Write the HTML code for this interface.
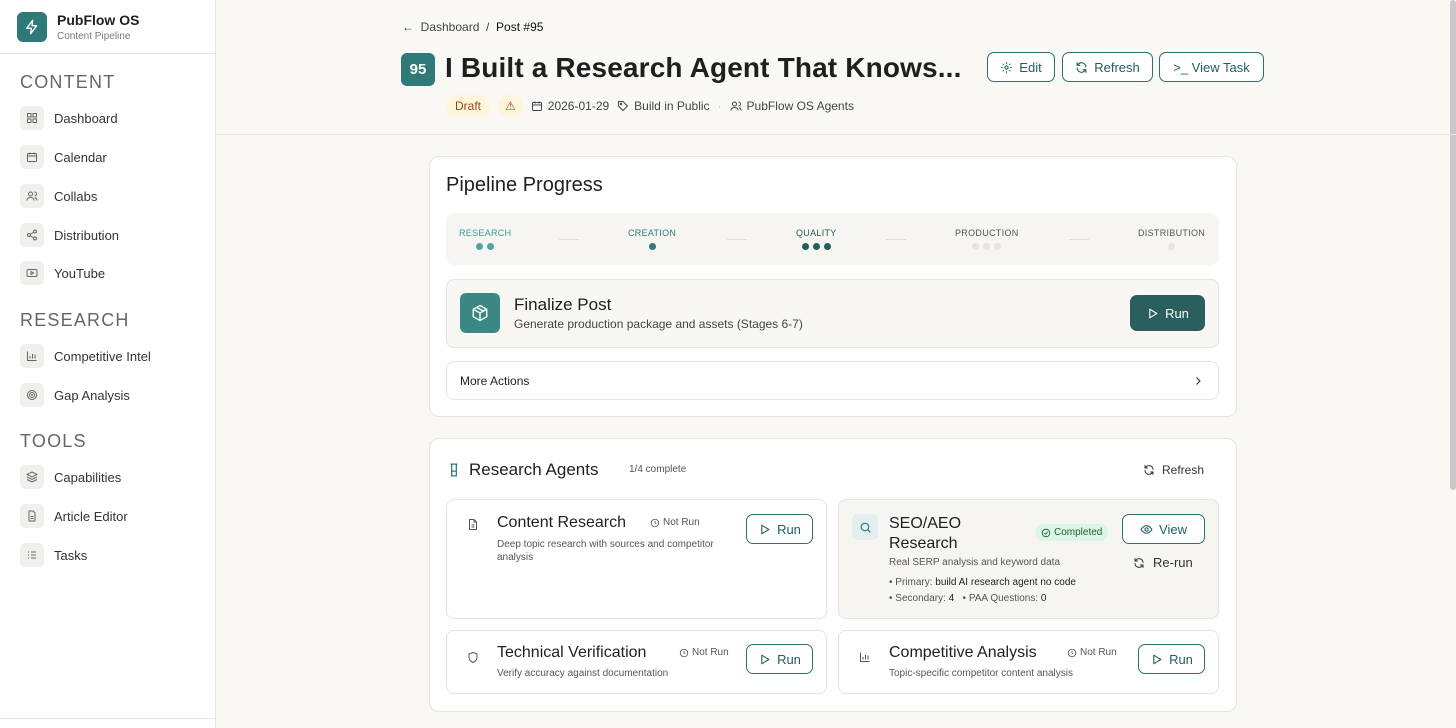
<!DOCTYPE html>
<html><head><meta charset="utf-8"><style>
*{box-sizing:border-box;margin:0;padding:0}
body{width:1456px;height:728px;overflow:hidden;background:#f9f8f5;font-family:"Liberation Sans",sans-serif;color:#1f1f1f;position:relative}
.sb{position:absolute;left:0;top:0;width:216px;height:728px;background:#fff;border-right:1px solid #e6e4df}
.logo{position:absolute;left:17px;top:12px;width:30px;height:30px;border-radius:6px;background:#2f7a78;display:flex;align-items:center;justify-content:center}
.brand{position:absolute;left:57px;top:12px;font-weight:bold;font-size:14px}
.brand small{display:block;font-weight:normal;font-size:10px;color:#777;margin-top:3px}
.sbline{position:absolute;left:0;top:53px;width:215px;border-top:1px solid #e6e4df}
.sec{position:absolute;left:20px;font-size:18px;color:#666;letter-spacing:1.2px}
.it{position:absolute;left:20px;display:flex;align-items:center;font-size:13px;color:#333}
.it i{width:24px;height:24px;border-radius:5px;background:#f0efec;margin-right:10px;display:flex;align-items:center;justify-content:center}
.hdrline{position:absolute;left:216px;right:0;top:134px;border-top:1px solid #e6e4df}
.crumb{position:absolute;left:402px;top:20px;font-size:12px;color:#444}
.num{position:absolute;left:401px;top:53px;width:34px;height:33px;border-radius:6px;background:#2f7a78;color:#fff;font-weight:bold;font-size:15px;display:flex;align-items:center;justify-content:center}
h1{position:absolute;left:445px;top:52px;font-size:28px;font-weight:bold;letter-spacing:0.15px}
.btn{position:absolute;height:30px;border:1.5px solid #2f6f6d;border-radius:7px;color:#235e5c;font-size:13px;display:flex;align-items:center;justify-content:center;gap:6px;background:#fff}
.meta{position:absolute;top:95px;left:446px;display:flex;align-items:center;font-size:12px;color:#444;gap:8px}
.meta span{display:flex;align-items:center;gap:5px}
.pill{background:#fdf6dc;color:#9a4a10;border-radius:10px;padding:4px 9px}
.card{position:absolute;left:429px;width:808px;background:#fff;border:1px solid #e6e4df;border-radius:10px}
.steps{position:absolute;left:446px;top:213px;width:773px;height:52px;background:#f6f5f2;border-radius:8px}
.st{position:absolute;top:15px;font-size:9px;letter-spacing:.3px;text-align:center}
.dots{margin-top:5px;display:flex;gap:4px;justify-content:center}
.dots b{width:7px;height:7px;border-radius:50%;display:block}
.dash{position:absolute;top:26px;width:20px;border-top:1px solid #ddd}
.sub{position:absolute;background:#fff;border:1px solid #e6e4df;border-radius:8px}
.agt{font-size:16px;color:#1f1f1f}
.nr{font-size:10px;color:#555;display:flex;align-items:center;gap:3px}
.d{font-size:10px;color:#555}
</style></head><body>
<svg width="0" height="0" style="position:absolute"><defs>
<symbol id="play" viewBox="0 0 24 24"><path d="M7 4l13 8-13 8z" fill="none" stroke="currentColor" stroke-width="2" stroke-linejoin="round"/></symbol>
<symbol id="clock" viewBox="0 0 24 24"><g fill="none" stroke="currentColor" stroke-width="2"><circle cx="12" cy="12" r="9"/><path d="M12 7v5l3 2"/></g></symbol>
<symbol id="ref" viewBox="0 0 24 24"><g fill="none" stroke="currentColor" stroke-width="2" stroke-linecap="round"><path d="M20 11a8 8 0 00-14-5L4 8M4 3v5h5M4 13a8 8 0 0014 5l2-2M20 21v-5h-5"/></g></symbol>
</defs></svg>
<div class="sb">
<div class="logo"><svg width="16" height="16" viewBox="0 0 24 24" fill="none" stroke="#fff" stroke-width="2" stroke-linejoin="round"><path d="M13 2L4 14h7l-1 8 9-12h-7z"/></svg></div>
<div class="brand">PubFlow OS<small>Content Pipeline</small></div>
<div class="sbline"></div>
<div class="sec" style="top:72px">CONTENT</div>
<div class="it" style="top:106px"><i><svg width="12" height="12" viewBox="0 0 24 24" fill="none" stroke="#666" stroke-width="2"><rect x="3" y="3" width="7" height="7"/><rect x="14" y="3" width="7" height="7"/><rect x="3" y="14" width="7" height="7"/><rect x="14" y="14" width="7" height="7"/></svg></i>Dashboard</div>
<div class="it" style="top:145px"><i><svg width="12" height="12" viewBox="0 0 24 24" fill="none" stroke="#666" stroke-width="2"><rect x="3" y="5" width="18" height="16" rx="2"/><path d="M3 10h18M8 3v4M16 3v4"/></svg></i>Calendar</div>
<div class="it" style="top:184px"><i><svg width="12" height="12" viewBox="0 0 24 24" fill="none" stroke="#666" stroke-width="2"><circle cx="9" cy="8" r="4"/><path d="M2 21c0-4 3-6 7-6s7 2 7 6M17 4a4 4 0 010 8M22 21c0-3-2-5-4-6"/></svg></i>Collabs</div>
<div class="it" style="top:223px"><i><svg width="12" height="12" viewBox="0 0 24 24" fill="none" stroke="#666" stroke-width="2"><circle cx="18" cy="5" r="3"/><circle cx="6" cy="12" r="3"/><circle cx="18" cy="19" r="3"/><path d="M8.6 13.5l6.8 4M15.4 6.5l-6.8 4"/></svg></i>Distribution</div>
<div class="it" style="top:261px"><i><svg width="12" height="12" viewBox="0 0 24 24" fill="none" stroke="#666" stroke-width="2"><rect x="2" y="5" width="20" height="14" rx="3"/><path d="M10 9l5 3-5 3z"/></svg></i>YouTube</div>
<div class="sec" style="top:310px">RESEARCH</div>
<div class="it" style="top:344px"><i><svg width="12" height="12" viewBox="0 0 24 24" fill="none" stroke="#666" stroke-width="2"><path d="M3 3v18h18M8 17v-5M13 17V8M18 17v-8"/></svg></i>Competitive Intel</div>
<div class="it" style="top:383px"><i><svg width="12" height="12" viewBox="0 0 24 24" fill="none" stroke="#666" stroke-width="2"><circle cx="12" cy="12" r="9"/><circle cx="12" cy="12" r="5"/><circle cx="12" cy="12" r="1"/></svg></i>Gap Analysis</div>
<div class="sec" style="top:431px">TOOLS</div>
<div class="it" style="top:465px"><i><svg width="12" height="12" viewBox="0 0 24 24" fill="none" stroke="#666" stroke-width="2"><path d="M12 2l10 5-10 5L2 7z M2 12l10 5 10-5M2 17l10 5 10-5"/></svg></i>Capabilities</div>
<div class="it" style="top:504px"><i><svg width="12" height="12" viewBox="0 0 24 24" fill="none" stroke="#666" stroke-width="2"><path d="M14 2H6v20h12V6zM9 13h6M9 17h6"/></svg></i>Article Editor</div>
<div class="it" style="top:543px"><i><svg width="12" height="12" viewBox="0 0 24 24" fill="none" stroke="#666" stroke-width="2"><path d="M4 6h2M10 6h10M4 12h2M10 12h10M4 18h2M10 18h10"/></svg></i>Tasks</div>
<div style="position:absolute;left:0;top:718px;width:215px;border-top:1px solid #e6e4df"></div>
</div>
<div style="position:absolute;right:0;top:0;width:6px;height:490px;background:#c9c9c9;border-radius:3px"></div>

<div class="crumb">← &nbsp;Dashboard &nbsp;/ &nbsp;<span style="color:#111">Post #95</span></div>
<div class="num">95</div>
<h1>I Built a Research Agent That Knows...</h1>
<div class="btn" style="left:987px;top:52px;width:68px"><svg width="13" height="13" viewBox="0 0 24 24" fill="none" stroke="currentColor" stroke-width="2"><circle cx="12" cy="12" r="3"/><path d="M12 2v3M12 19v3M2 12h3M19 12h3M5 5l2 2M17 17l2 2M5 19l2-2M17 7l2-2"/></svg>Edit</div>
<div class="btn" style="left:1062px;top:52px;width:91px"><svg width="13" height="13"><use href="#ref"/></svg>Refresh</div>
<div class="btn" style="left:1159px;top:52px;width:105px">&gt;_ View Task</div>
<div class="meta"><span class="pill">Draft</span><span class="pill" style="padding:4px 7px">⚠</span><span><svg width="12" height="12" viewBox="0 0 24 24" fill="none" stroke="#444" stroke-width="2"><rect x="3" y="5" width="18" height="16" rx="2"/><path d="M3 10h18M8 3v4M16 3v4"/></svg>2026-01-29</span><span><svg width="12" height="12" viewBox="0 0 24 24" fill="none" stroke="#444" stroke-width="2"><path d="M3 3h9l9 9-9 9-9-9z"/><circle cx="8" cy="8" r="1.5"/></svg>Build in Public</span><span style="color:#bbb">·</span><span><svg width="12" height="12" viewBox="0 0 24 24" fill="none" stroke="#444" stroke-width="2"><circle cx="9" cy="8" r="4"/><path d="M2 21c0-4 3-6 7-6s7 2 7 6M17 4a4 4 0 010 8M22 21c0-3-2-5-4-6"/></svg>PubFlow OS Agents</span></div>
<div class="hdrline"></div>

<div class="card" style="top:156px;height:261px"></div>
<div style="position:absolute;left:446px;top:174px;font-size:20px">Pipeline Progress</div>
<div class="steps">
<div class="st" style="left:13px;color:#3e9995">RESEARCH<div class="dots"><b style="background:#4fa6a2"></b><b style="background:#4fa6a2"></b></div></div>
<div class="dash" style="left:113px"></div>
<div class="st" style="left:182px;color:#2f7a78">CREATION<div class="dots"><b style="background:#2f7a78"></b></div></div>
<div class="dash" style="left:281px"></div>
<div class="st" style="left:350px;color:#235e5c">QUALITY<div class="dots"><b style="background:#235e5c"></b><b style="background:#235e5c"></b><b style="background:#235e5c"></b></div></div>
<div class="dash" style="left:440px"></div>
<div class="st" style="left:509px;color:#555">PRODUCTION<div class="dots"><b style="background:#e6e4e0"></b><b style="background:#e6e4e0"></b><b style="background:#e6e4e0"></b></div></div>
<div class="dash" style="left:623px"></div>
<div class="st" style="left:692px;color:#555">DISTRIBUTION<div class="dots"><b style="background:#e6e4e0"></b></div></div>
</div>
<div class="sub" style="left:446px;top:279px;width:773px;height:69px;background:#f8f7f4"></div>
<div style="position:absolute;left:460px;top:293px;width:40px;height:40px;border-radius:6px;background:#3a8784;display:flex;align-items:center;justify-content:center"><svg width="18" height="18" viewBox="0 0 24 24" fill="none" stroke="#fff" stroke-width="1.8"><path d="M12 2l9 5v10l-9 5-9-5V7zM3 7l9 5 9-5M12 12v10M7.5 4.5l9 5"/></svg></div>
<div style="position:absolute;left:514px;top:295px;font-size:17px">Finalize Post</div>
<div style="position:absolute;left:514px;top:317px;font-size:12px;color:#444">Generate production package and assets (Stages 6-7)</div>
<div class="btn" style="left:1130px;top:295px;width:75px;height:36px;background:#2a5f5d;color:#fff;border-color:#2a5f5d"><svg width="13" height="13"><use href="#play"/></svg>Run</div>
<div class="sub" style="left:446px;top:361px;width:773px;height:39px"></div>
<div style="position:absolute;left:460px;top:374px;font-size:12px;color:#222">More Actions</div>
<svg style="position:absolute;left:1192px;top:375px" width="12" height="12" viewBox="0 0 24 24" fill="none" stroke="#333" stroke-width="2.2"><path d="M9 5l7 7-7 7"/></svg>

<div class="card" style="top:438px;height:274px"></div>
<svg style="position:absolute;left:447px;top:462px" width="14" height="16" viewBox="0 0 24 24" fill="none" stroke="#2f7a78" stroke-width="2.2"><path d="M6 2h12M8 2v20h8V2M8 14h8"/></svg>
<div style="position:absolute;left:469px;top:460px;font-size:17px">Research Agents</div>
<div style="position:absolute;left:629px;top:464px;font-size:10px;color:#555">1/4 complete</div>
<div style="position:absolute;left:1143px;top:463px;font-size:12px;color:#333;display:flex;align-items:center;gap:7px"><svg width="12" height="12"><use href="#ref"/></svg>Refresh</div>

<div class="sub" style="left:446px;top:499px;width:381px;height:120px"></div>
<svg style="position:absolute;left:467px;top:518px" width="12" height="13" viewBox="0 0 24 24" fill="none" stroke="#555" stroke-width="2"><path d="M14 2H5v20h14V7zM14 2v5h5M9 13h6M9 17h6"/></svg>
<div class="agt" style="position:absolute;left:497px;top:514px">Content Research</div>
<div class="nr" style="position:absolute;left:650px;top:517px"><svg width="10" height="10"><use href="#clock"/></svg>Not Run</div>
<div class="d" style="position:absolute;left:497px;top:538px;width:240px;line-height:13px">Deep topic research with sources and competitor analysis</div>
<div class="btn" style="left:746px;top:514px;width:67px;height:30px"><svg width="13" height="13"><use href="#play"/></svg>Run</div>

<div class="sub" style="left:838px;top:499px;width:381px;height:120px;background:#f6f5f2"></div>
<div style="position:absolute;left:852px;top:514px;width:26px;height:26px;border-radius:5px;background:#e3efee;display:flex;align-items:center;justify-content:center"><svg width="13" height="13" viewBox="0 0 24 24" fill="none" stroke="#2f7a78" stroke-width="2.2"><circle cx="11" cy="11" r="7"/><path d="M16 16l5 5"/></svg></div>
<div class="agt" style="position:absolute;left:889px;top:514px;line-height:20px">SEO/AEO<br>Research</div>
<div style="position:absolute;left:1035px;top:524px;background:#dcf5e6;color:#25603a;font-size:10px;border-radius:9px;padding:3px 6px;display:flex;align-items:center;gap:3px"><svg width="10" height="10" viewBox="0 0 24 24" fill="none" stroke="#25603a" stroke-width="2.2"><circle cx="12" cy="12" r="9"/><path d="M8 12l3 3 5-6"/></svg>Completed</div>
<div class="btn" style="left:1122px;top:514px;width:83px;height:30px"><svg width="13" height="13" viewBox="0 0 24 24" fill="none" stroke="currentColor" stroke-width="2"><path d="M2 12s4-7 10-7 10 7 10 7-4 7-10 7S2 12 2 12z"/><circle cx="12" cy="12" r="3"/></svg>View</div>
<div style="position:absolute;left:1133px;top:555px;font-size:13px;color:#333;display:flex;align-items:center;gap:8px"><svg width="12" height="12"><use href="#ref"/></svg>Re-run</div>
<div class="d" style="position:absolute;left:889px;top:557px">Real SERP analysis and keyword data</div>
<div class="d" style="position:absolute;left:889px;top:577px">• Primary: <span style="color:#222">build AI research agent no code</span></div>
<div class="d" style="position:absolute;left:889px;top:593px">• Secondary: <span style="color:#222">4</span> &nbsp;&nbsp;• PAA Questions: <span style="color:#222">0</span></div>

<div class="sub" style="left:446px;top:630px;width:381px;height:64px"></div>
<svg style="position:absolute;left:467px;top:651px" width="12" height="13" viewBox="0 0 24 24" fill="none" stroke="#555" stroke-width="2"><path d="M12 2l8 3v7c0 5-4 8-8 10-4-2-8-5-8-10V5z"/></svg>
<div class="agt" style="position:absolute;left:497px;top:644px">Technical Verification</div>
<div class="nr" style="position:absolute;left:679px;top:647px"><svg width="10" height="10"><use href="#clock"/></svg>Not Run</div>
<div class="d" style="position:absolute;left:497px;top:668px">Verify accuracy against documentation</div>
<div class="btn" style="left:746px;top:644px;width:67px;height:30px"><svg width="13" height="13"><use href="#play"/></svg>Run</div>

<div class="sub" style="left:838px;top:630px;width:381px;height:64px"></div>
<svg style="position:absolute;left:859px;top:651px" width="12" height="12" viewBox="0 0 24 24" fill="none" stroke="#555" stroke-width="2"><path d="M3 3v18h18M8 17v-5M13 17V8M18 17v-8"/></svg>
<div class="agt" style="position:absolute;left:889px;top:644px">Competitive Analysis</div>
<div class="nr" style="position:absolute;left:1067px;top:647px"><svg width="10" height="10"><use href="#clock"/></svg>Not Run</div>
<div class="d" style="position:absolute;left:889px;top:668px">Topic-specific competitor content analysis</div>
<div class="btn" style="left:1138px;top:644px;width:67px;height:30px"><svg width="13" height="13"><use href="#play"/></svg>Run</div>
</body></html>
